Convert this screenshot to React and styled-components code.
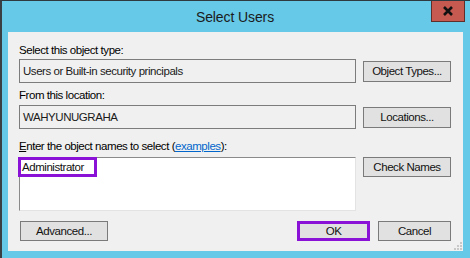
import React from "react";
import styled, { createGlobalStyle } from "styled-components";

const GlobalStyle = createGlobalStyle`
  html, body {
    margin: 0;
    padding: 0;
    background: #66c9e8;
  }
  body {
    font-family: "Liberation Sans", Arial, sans-serif;
    font-size: 11.5px;
    letter-spacing: -0.45px;
    color: #000;
  }
`;

const Window = styled.div`
  width: 470px;
  height: 258px;
  box-sizing: border-box;
  background: #66c9e8;
  border-top: 1px solid #2e3a40;
  border-left: 2px solid #3a3f44;
  display: flex;
  flex-direction: column;
`;

const TitleBar = styled.div`
  height: 31px;
  display: grid;
  grid-template-columns: 1fr auto 1fr;
  align-items: start;
`;

const Title = styled.div`
  grid-column: 2;
  font-size: 14px;
  letter-spacing: -0.1px;
  line-height: 32px;
  color: #1b1b1b;
  margin-left: -2px;
`;

const CloseButton = styled.div`
  grid-column: 3;
  justify-self: end;
  margin-right: 5px;
  width: 34px;
  height: 21px;
  box-sizing: border-box;
  background: #c75a50;
  border: 1px solid #5f2e2a;
  border-top: none;
  display: flex;
  align-items: center;
  justify-content: center;
`;

const Client = styled.div`
  position: relative;
  margin: 0 7px 7px 6px;
  height: 219px;
  box-sizing: border-box;
  background: #f0f0f0;
  padding: 10px 12px 0 11px;
  display: flex;
  flex-direction: column;
`;

const Label = styled.div`
  height: 16px;
  line-height: 16px;
  margin-top: ${({ $top }) => $top || 0}px;
  white-space: nowrap;
`;

const Row = styled.div`
  display: flex;
  align-items: ${({ $align }) => $align || "center"};
  gap: 7px;
  margin-top: ${({ $top }) => $top || 0}px;
`;

const Field = styled.div`
  width: 337px;
  height: 24px;
  box-sizing: border-box;
  border: 1px solid #7c7c7c;
  padding-left: 3px;
  display: flex;
  align-items: center;
  color: #1a1a1a;
  white-space: nowrap;
`;

const NamesBox = styled.div`
  width: 337px;
  height: 54px;
  box-sizing: border-box;
  background: #fff;
  border: 1px solid #e3e3e3;
  border-top-color: #8a8a8a;
  border-left-color: #8a8a8a;
`;

const Highlight = styled.span`
  display: inline-block;
  margin: -1px 0 0 -2px;
  width: 79px;
  height: 20px;
  box-sizing: border-box;
  border: 3px solid #8a12d6;
  padding-left: 1px;
  line-height: 14px;
  color: #111;
`;

const Button = styled.div`
  width: ${({ $w }) => $w || 88}px;
  height: ${({ $h }) => $h || 21}px;
  box-sizing: border-box;
  background: #e1e1e1;
  border: ${({ $focus }) => ($focus ? "3px solid #8a12d6" : "1px solid #7a7a7a")};
  display: flex;
  align-items: center;
  justify-content: center;
  color: #111;
  white-space: nowrap;
`;

const Footer = styled.div`
  display: flex;
  align-items: center;
  gap: 8px;
  margin-top: 10px;
  padding-left: 1px;
`;

const Spacer = styled.div`
  flex: 1;
`;

const Link = styled.a`
  color: #0066cc;
  text-decoration: underline;
`;

const Grip = styled.svg`
  position: absolute;
  right: 1px;
  bottom: 1px;
`;

const CloseIcon = () => (
  <svg width="12" height="10" viewBox="0 0 12 10">
    <path d="M2 1 L10 9 M10 1 L2 9" stroke="#111" strokeWidth="2.6" fill="none" />
  </svg>
);

const GripIcon = () => {
  const dots = [
    [8, 0],
    [8, 3],
    [5, 3],
    [8, 6],
    [5, 6],
    [2, 6],
  ];
  return (
    <Grip width="10" height="8" viewBox="0 0 10 8">
      {dots.map(([x, y]) => (
        <rect key={`${x}-${y}`} x={x} y={y} width="2" height="2" fill="#c8c8c8" />
      ))}
    </Grip>
  );
};

export default function App() {
  return (
    <>
      <GlobalStyle />
      <Window>
        <TitleBar>
          <Title>Select Users</Title>
          <CloseButton>
            <CloseIcon />
          </CloseButton>
        </TitleBar>
        <Client>
          <Label>Select this object type:</Label>
          <Row $top={1}>
            <Field>Users or Built-in security principals</Field>
            <Button>Object Types...</Button>
          </Row>
          <Label $top={4}>From this location:</Label>
          <Row $top={2}>
            <Field>WAHYUNUGRAHA</Field>
            <Button>Locations...</Button>
          </Row>
          <Label $top={9}>
            <u>E</u>nter the object names to select (<Link href="#">examples</Link>):
          </Label>
          <Row $top={3} $align="flex-start">
            <NamesBox>
              <Highlight>Administrator</Highlight>
            </NamesBox>
            <Button $h={20}>Check Names</Button>
          </Row>
          <Footer>
            <Button $h={20}>Advanced...</Button>
            <Spacer />
            <Button $w={73} $h={20} $focus>
              OK
            </Button>
            <Button $w={73} $h={20}>
              Cancel
            </Button>
          </Footer>
          <GripIcon />
        </Client>
      </Window>
    </>
  );
}
